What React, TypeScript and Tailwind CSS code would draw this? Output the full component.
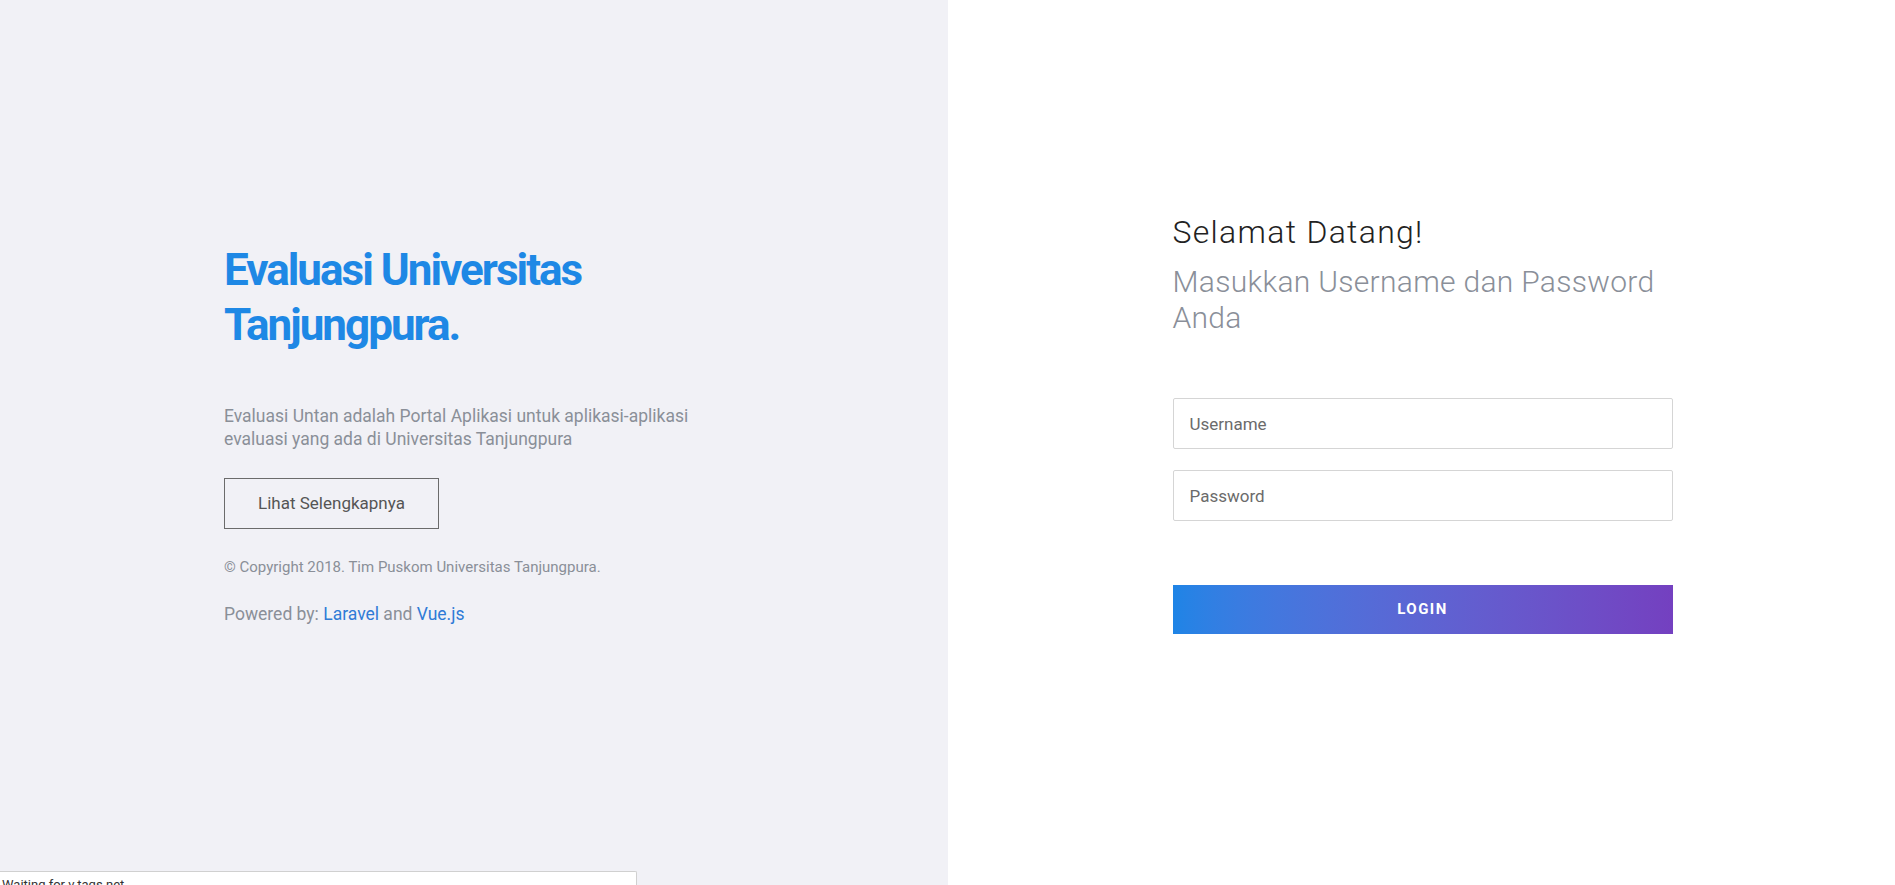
import React from 'react'

const App = () => {
  return (
    <div className="relative flex h-[885px] w-full overflow-hidden font-['Roboto',sans-serif]">
      {/* kiri: info portal */}
      <section className="w-1/2 bg-[#f1f1f6] pl-[224px] pt-[243px]">
        <div className="w-[500px]">
          <h1 className="text-[44px] font-bold leading-[55px] tracking-[-2px] text-[#1e88e5]">
            Evaluasi Universitas
            <br />
            Tanjungpura.
          </h1>
          <p className="mt-[52px] text-[17.5px] leading-[23px] text-[#8a8f98]">
            Evaluasi Untan adalah Portal Aplikasi untuk aplikasi-aplikasi evaluasi yang ada di Universitas Tanjungpura
          </p>
          <button className="mt-[27px] h-[51px] w-[215px] border border-[#6b6b6b] text-[17px] text-[#555]">
            Lihat Selengkapnya
          </button>
          <p className="mt-[28px] text-[15px] leading-[20px] text-[#8a8f98]">
            © Copyright 2018. Tim Puskom Universitas Tanjungpura.
          </p>
          <p className="mt-[26px] text-[17.5px] leading-[23px] text-[#8a8f98]">
            Powered by: <a className="text-[#2f7bd6]">Laravel</a> and <a className="text-[#2f7bd6]">Vue.js</a>
          </p>
        </div>
      </section>

      {/* kanan: form login */}
      <section className="w-1/2 bg-white pl-[225px] pt-[213px]">
        <div className="w-[500px]">
          <h2 className="text-[32px] font-light leading-[38px] tracking-[1.3px] text-[#222]">Selamat Datang!</h2>
          <p className="mt-[13px] w-[490px] text-[30px] font-light leading-[36px] tracking-[0.3px] text-[#8a8f99]">
            Masukkan Username dan Password Anda
          </p>
          <div className="mt-[62px] flex flex-col gap-[21px]">
            <input
              placeholder="Username"
              className="h-[51px] w-full rounded-[2px] border border-[#d5d5d5] px-[16px] text-[17px] outline-none placeholder:text-[#6b6b6b]"
            />
            <input
              type="password"
              placeholder="Password"
              className="h-[51px] w-full rounded-[2px] border border-[#d5d5d5] px-[16px] text-[17px] outline-none placeholder:text-[#6b6b6b]"
            />
          </div>
          <button className="mt-[64px] h-[49px] w-full bg-gradient-to-r from-[#1e84e6] to-[#7440c0] text-[15px] font-bold tracking-[1.5px] text-white">
            LOGIN
          </button>
        </div>
      </section>

      {/* status bar browser */}
      <div className="absolute bottom-0 left-0 h-[14px] w-[637px] overflow-hidden rounded-tr-[2px] border-t border-r border-[#d0d0d0] bg-white pl-[2px] pt-[6px] text-[13px] leading-[14px] text-[#333]">
        Waiting for v.tags.net...
      </div>
    </div>
  )
}

export default App
